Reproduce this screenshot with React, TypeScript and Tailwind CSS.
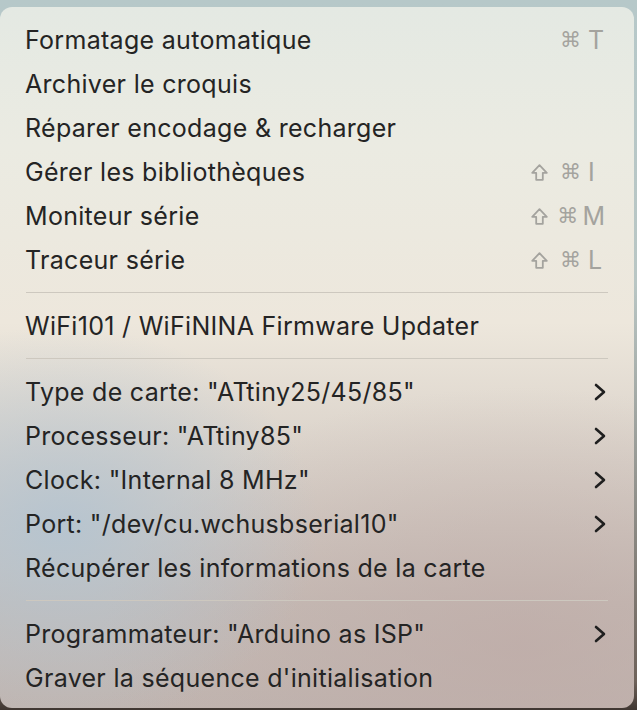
import React from "react";

type Item =
  | { kind: "item"; label: string; shortcut?: { shift?: boolean; key: string }; sub?: boolean }
  | { kind: "sep" };

const items: Item[] = [
  { kind: "item", label: "Formatage automatique", shortcut: { key: "T" } },
  { kind: "item", label: "Archiver le croquis" },
  { kind: "item", label: "Réparer encodage & recharger" },
  { kind: "item", label: "Gérer les bibliothèques", shortcut: { shift: true, key: "I" } },
  { kind: "item", label: "Moniteur série", shortcut: { shift: true, key: "M" } },
  { kind: "item", label: "Traceur série", shortcut: { shift: true, key: "L" } },
  { kind: "sep" },
  { kind: "item", label: "WiFi101 / WiFiNINA Firmware Updater" },
  { kind: "sep" },
  { kind: "item", label: 'Type de carte: "ATtiny25/45/85"', sub: true },
  { kind: "item", label: 'Processeur: "ATtiny85"', sub: true },
  { kind: "item", label: 'Clock: "Internal 8 MHz"', sub: true },
  { kind: "item", label: 'Port: "/dev/cu.wchusbserial10"', sub: true },
  { kind: "item", label: "Récupérer les informations de la carte" },
  { kind: "sep" },
  { kind: "item", label: 'Programmateur: "Arduino as ISP"', sub: true },
  { kind: "item", label: "Graver la séquence d'initialisation" },
];

function ShiftIcon() {
  return (
    <svg width="17" height="17" viewBox="0 0 17 17" className="shrink-0">
      <path
        d="M8.5 1.2 L15.8 8.8 H11.8 V15.8 H5.2 V8.8 H1.2 Z"
        fill="none"
        stroke="#a4a39e"
        strokeWidth="1.8"
        strokeLinejoin="round"
      />
    </svg>
  );
}

function Chevron() {
  return (
    <svg width="12" height="18" viewBox="0 0 12 18">
      <polyline
        points="2,2 10,9 2,16"
        fill="none"
        stroke="#1f1f1f"
        strokeWidth="2.6"
        strokeLinecap="round"
        strokeLinejoin="round"
      />
    </svg>
  );
}

export default function App() {
  return (
    <div className="w-[637px] h-[710px] overflow-hidden bg-[linear-gradient(180deg,#b6c8c9_0%,#b9c6c4_40%,#6e625a_96%,#3f3631_100%)]">
      <div
        className="mt-[7px] ml-0 w-[634px] h-[701px] rounded-[12px] overflow-hidden pt-[11px] bg-[radial-gradient(ellipse_260px_200px_at_60px_520px,rgba(178,196,210,0.85),rgba(178,196,210,0)),radial-gradient(ellipse_420px_260px_at_520px_640px,rgba(190,170,166,0.7),rgba(190,170,166,0)),linear-gradient(180deg,#e4e9e3_0%,#ebebe2_20%,#ede7dc_45%,#d9d1c9_65%,#c6bcb6_85%,#c0b5b0_100%)]"
        style={{ fontFamily: "Inter, 'Noto Sans', sans-serif" }}
      >
        {items.map((it, i) =>
          it.kind === "sep" ? (
            <div key={i} className="pt-[10px] pb-[11px] pl-[26px] pr-[26px]">
              <div className="h-px bg-[#cdc8bf]" />
            </div>
          ) : (
            <div key={i} className="h-[44px] flex items-center pl-[25px] pr-[28px]">
              <span className="text-[25px] text-[#242424] tracking-[0.3px] leading-none">{it.label}</span>
              <div className="ml-auto flex items-center">
                {it.shortcut && (
                  <div className="flex items-center text-[#a4a39e] w-[74px] translate-x-[-1px]">
                    <div className="w-[29px] flex justify-start">{it.shortcut.shift && <ShiftIcon />}</div>
                    <span
                      className="w-[28px] text-[21px] leading-none"
                      style={{ fontFamily: "'DejaVu Sans', sans-serif" }}
                    >
                      ⌘
                    </span>
                    <span className="text-[25px] leading-none">{it.shortcut.key}</span>
                  </div>
                )}
                {it.sub && <Chevron />}
              </div>
            </div>
          )
        )}
      </div>
    </div>
  );
}
